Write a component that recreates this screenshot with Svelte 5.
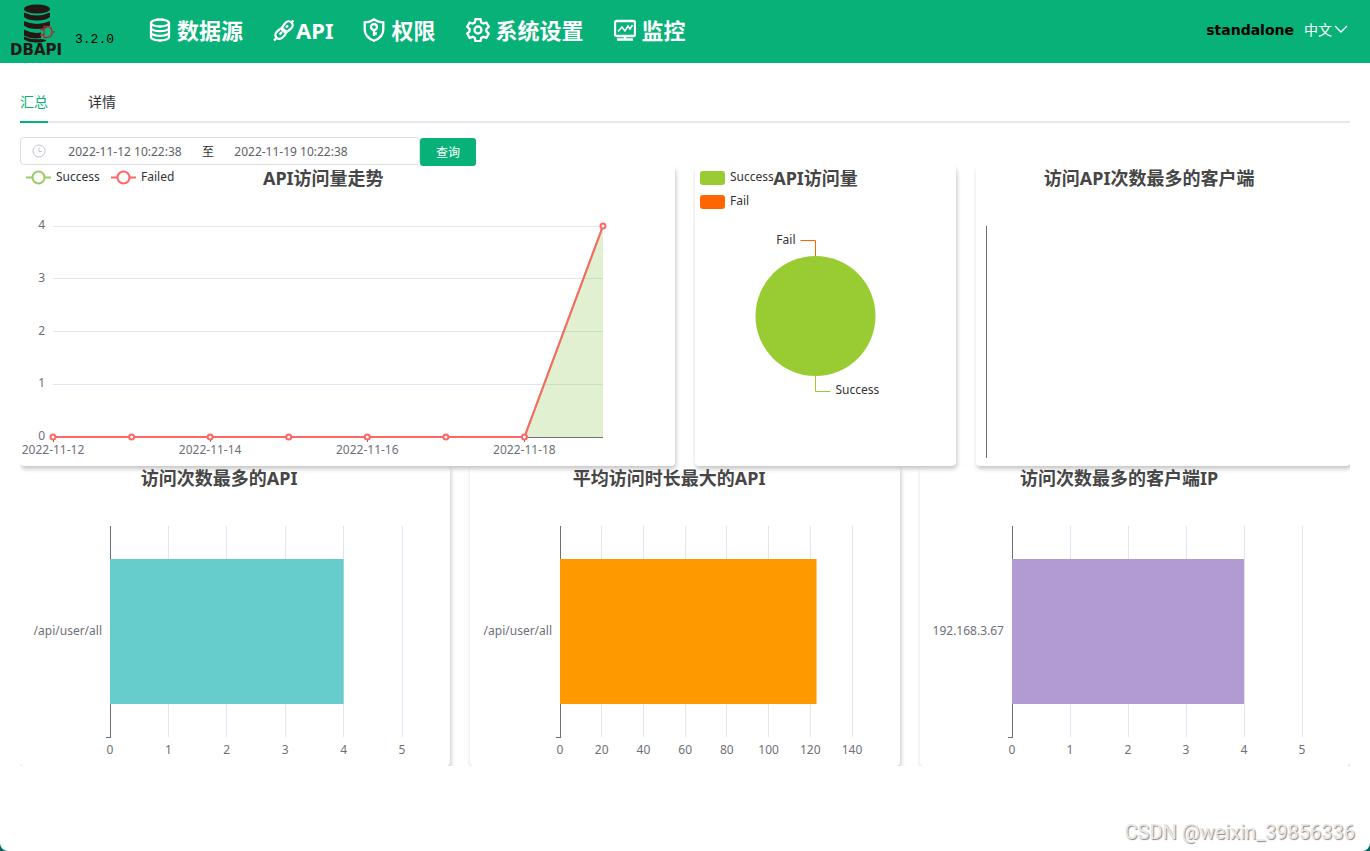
<script lang="ts">
    type BarChart = {
        title: string;
        label: string;
        value: number;
        step: number;
        ticks: number;
        color: string;
        left: number;
    };

    let start = $state("2022-11-12 10:22:38");
    let end = $state("2022-11-19 10:22:38");
    let activeTab = $state("summary");

    let lineCard = $state(655);
    let pieCard = $state(261);
    let clientCard = $state(374);
    let barCard = $state(430);

    const RATIO = 0.926;
    const TOP = 60;
    const BOTTOM = 271;

    const days = ["2022-11-12", "2022-11-13", "2022-11-14", "2022-11-15", "2022-11-16", "2022-11-17", "2022-11-18", "2022-11-19"];
    const success = [0, 0, 0, 0, 0, 0, 0, 4];
    const yTicks = [0, 1, 2, 3, 4];

    const bars: BarChart[] = [
        { title: "访问次数最多的API", label: "/api/user/all", value: 4, step: 1, ticks: 5, color: "#66cccc", left: 90 },
        { title: "平均访问时长最大的API", label: "/api/user/all", value: 123, step: 20, ticks: 7, color: "#ff9900", left: 90 },
        { title: "访问次数最多的客户端IP", label: "192.168.3.67", value: 4, step: 1, ticks: 5, color: "#b29bd2", left: 92 },
    ];

    const lineY = (v: number) => BOTTOM - (v / 4) * (BOTTOM - TOP);

    let lineRight = $derived(Math.round(lineCard * RATIO) - 24);
    let points = $derived(success.map((v, i) => ({ x: 33 + ((lineRight - 33) * i) / 7, y: lineY(v) })));
    let path = $derived(points.map((p) => `${p.x},${p.y}`).join(" "));
    let pieX = $derived(Math.floor((pieCard * RATIO) / 2) + 0.5);
    let barRight = $derived(Math.round(barCard * RATIO) - 16);

    const barX = (b: BarChart, v: number) => b.left + ((barRight - b.left) * v) / (b.step * b.ticks);
    const crisp = (v: number) => Math.floor(v) + 0.5;
</script>

<div class="page">
    <header>
        <svg class="logo" width="54" height="58" viewBox="0 0 54 58" role="img" aria-label="DBAPI">
            <g fill="#231815">
                <ellipse cx="27" cy="8" rx="13" ry="4.5" />
                <path d="M14 11.500q13 6 26 0v4.500q-4 3.500-13 3.500t-13-3.500z" />
                <path d="M14 20q13 6 26 0v4.500q-4 3.500-13 3.500t-13-3.500z" />
                <path d="M14 28.500q8 4.500 17 3v5.500q-10 1.500-17-2.500z" />
                <path d="M14 35.500q7 3.500 17 2.500l5 1v1q-4 1.500-9 1.500-9 0-13-3z" />
            </g>
            <path d="M30 28.500h4M30 34h4M34 25.500v11h3q5 0 5-5.500t-5-5.500zM42 31h3" fill="none" stroke="#b02a2d" stroke-width="1.300" />
            <text x="0" y="54" class="logo-text">DBAPI</text>
        </svg>
        <span class="version">3.2.0</span>

        <nav>
            <a href="#datasource">
                <svg class="icon" viewBox="0 0 22 24">
                    <ellipse cx="11" cy="5" rx="9" ry="3.500" />
                    <path d="M2 5v14c0 2 4 3.500 9 3.500s9-1.500 9-3.500V5M2 9.700c0 2 4 3.500 9 3.500s9-1.500 9-3.500M2 14.400c0 2 4 3.500 9 3.500s9-1.500 9-3.500" />
                </svg>
                <span>数据源</span>
            </a>
            <a href="#api" class="tight">
                <svg class="icon" viewBox="0 0 22 24">
                    <path d="M10 8l2.500-3.200c2-2 4.500-1.800 6-.3s1.700 4-.3 6L15 13c-1.600 1.300-3.700 1-5.200-.4S8.800 9.500 10 8z" />
                    <path d="M7 10.800l-3.200 3c-2 2-1.700 4.500-.3 6s4 1.700 6-.3l3-3.200" />
                    <path d="M7 10.800c1.500-.8 3-.3 4.200 1s1.900 3 1.300 4.500M18 5l2.500-2.500M3.500 20L1 22.500M6.500 16.500l2.500-2.500M13 9.500l2-2" />
                </svg>
                <span>API</span>
            </a>
            <a href="#auth">
                <svg class="icon" viewBox="0 0 22 24">
                    <path d="M11 1.500c3 2 6 2.700 9.300 2.800v7.200c0 5.500-3.500 9-9.300 11.300-5.800-2.300-9.300-5.800-9.300-11.300V4.300C5 4.200 8 3.500 11 1.500z" />
                    <circle cx="11" cy="9" r="3" />
                    <path d="M11 12v6M11 15.500h3" />
                </svg>
                <span>权限</span>
            </a>
            <a href="#settings">
                <svg class="icon wide" viewBox="0 0 24 24">
                    <path d="M9.500 2h5l.7 3.200 2 1.200 3.200-1 2.400 4.200-2.400 2.200v2.400l2.400 2.200-2.400 4.200-3.200-1-2 1.200-.7 3.200h-5l-.7-3.200-2-1.200-3.200 1-2.400-4.200 2.400-2.200v-2.400L1.200 9.600l2.400-4.200 3.200 1 2-1.200z" transform="translate(0 -.8)" />
                    <circle cx="12" cy="12" r="3.500" />
                </svg>
                <span>系统设置</span>
            </a>
            <a href="#monitor">
                <svg class="icon" viewBox="0 0 22 24">
                    <rect x="1" y="3" width="20" height="15" rx="1.500" />
                    <path class="thin" d="M4 13.500l4-4.500 3 4 3-5 2 3 2.500-4" />
                    <path d="M11 18v3.500M3 21.500h16" />
                </svg>
                <span>监控</span>
            </a>
        </nav>

        <div class="user">
            <span class="mode">standalone</span>
            <button class="lang" type="button">
                中文
                <svg width="14" height="14" viewBox="0 0 14 14"><path d="M1 3l6 6 6-6" /></svg>
            </button>
        </div>
    </header>

    <main>
        <div class="tabs" role="tablist">
            <button type="button" role="tab" aria-selected={activeTab === "summary"} class:active={activeTab === "summary"} onclick={() => (activeTab = "summary")}>汇总</button>
            <button type="button" role="tab" aria-selected={activeTab === "detail"} class:active={activeTab === "detail"} onclick={() => (activeTab = "detail")}>详情</button>
        </div>

        <form class="search" onsubmit={(e) => e.preventDefault()}>
            <div class="range">
                <svg width="14" height="14" viewBox="0 0 14 14"><circle cx="7" cy="7" r="6" /><path d="M7 3.500V7.500H10" /></svg>
                <input type="text" aria-label="开始时间" bind:value={start} />
                <span>至</span>
                <input type="text" aria-label="结束时间" bind:value={end} />
            </div>
            <button class="query" type="submit">查询</button>
        </form>

        <div class="charts">
            <section class="card trend" bind:clientWidth={lineCard}>
                <svg width="100%" height="300">
                    {#each [{ name: "Success", color: "#99cc66", x: 6 }, { name: "Failed", color: "#ff6666", x: 91 }] as item}
                        <line x1={item.x} x2={item.x + 25} y1="11.500" y2="11.500" stroke={item.color} stroke-width="2" />
                        <circle cx={item.x + 12.5} cy="11.500" r="6" fill="#fff" stroke={item.color} stroke-width="2" />
                        <text class="legend" x={item.x + 30} y="15">{item.name}</text>
                    {/each}
                    <text class="title" x={(lineCard * RATIO) / 2} y="19">API访问量走势</text>

                    {#each yTicks as tick}
                        <line class={tick ? "split" : "axis"} x1="33" x2={lineRight} y1={crisp(lineY(tick))} y2={crisp(lineY(tick))} />
                        <text class="label end" x="25" y={lineY(tick) + 3}>{tick}</text>
                    {/each}
                    <polygon points="33,{BOTTOM} {path} {lineRight},{BOTTOM}" fill="#99cc66" fill-opacity="0.3" />
                    <polyline points={path} fill="none" stroke="#99cc66" stroke-width="2" />
                    <polyline points={path} fill="none" stroke="#ff6666" stroke-width="2" />
                    {#each points as p, i}
                        {#if i % 2 === 0}
                            <line class="axis" x1={crisp(p.x)} x2={crisp(p.x)} y1={BOTTOM} y2={BOTTOM + 5} />
                            <text class="label" x={p.x} y="288">{days[i]}</text>
                        {/if}
                        <circle cx={p.x} cy={p.y} r="2.500" fill="#fff" stroke="#ff6666" stroke-width="2" />
                    {/each}
                </svg>
            </section>

            <section class="card total" bind:clientWidth={pieCard}>
                <svg width="100%" height="300">
                    <rect x="5" y="5" width="25" height="14" rx="3" fill="#99cc33" />
                    <text class="legend" x="35" y="15">Success</text>
                    <rect x="5" y="29" width="25" height="14" rx="3" fill="#ff6600" />
                    <text class="legend" x="35" y="39">Fail</text>
                    <text class="title" x={pieX} y="19">API访问量</text>

                    <circle cx={pieX} cy="150" r="60" fill="#99cc33" />
                    <path d="M{pieX} 90V74.500H{pieX - 15}" fill="none" stroke="#ff6600" />
                    <text class="legend end" x={pieX - 20} y="78">Fail</text>
                    <path d="M{pieX} 210V225.500H{pieX + 15}" fill="none" stroke="#99cc33" />
                    <text class="legend" x={pieX + 20} y="228">Success</text>
                </svg>
            </section>

            <section class="card clients" bind:clientWidth={clientCard}>
                <svg width="100%" height="300">
                    <text class="title" x={(clientCard * RATIO) / 2} y="19">访问API次数最多的客户端</text>
                    <line class="axis" x1="10.500" x2="10.500" y1={TOP} y2="292" />
                </svg>
            </section>

            {#each bars as bar}
                <section class="card rank" bind:clientWidth={barCard}>
                    <svg width="100%" height="300">
                        <text class="title" x={(barCard * RATIO) / 2} y="19">{bar.title}</text>
                        {#each Array(bar.ticks + 1) as _, i}
                            {@const x = barX(bar, i * bar.step)}
                            {#if i > 0}
                                <line class="split" x1={crisp(x)} x2={crisp(x)} y1={TOP} y2={BOTTOM} />
                            {/if}
                            <text class="label" {x} y="288">{i * bar.step}</text>
                        {/each}
                        <rect x={bar.left} y="93" width={barX(bar, bar.value) - bar.left} height="145" fill={bar.color} />
                        <path class="axis" d="M{bar.left + 0.5} {TOP}V93M{bar.left + 0.5} 238V{BOTTOM + 0.5}h-5" />
                        <text class="label end" x={bar.left - 8} y="169">{bar.label}</text>
                    </svg>
                </section>
            {/each}
        </div>
    </main>

    <footer>CSDN @weixin_39856336</footer>
</div>

<style>
    :global(body) {
        margin: 0;
        background: #06695f;
    }

    .page {
        min-height: 100vh;
        display: flex;
        flex-direction: column;
        background: #fff;
        border-radius: 0 0 8px 8px;
        font-family: "Noto Sans", "Noto Sans CJK SC", sans-serif;
        color: #303133;
    }

    button,
    input {
        font-family: inherit;
        border: 0;
        padding: 0;
        background: none;
    }

    header {
        box-sizing: border-box;
        height: 63px;
        display: flex;
        align-items: center;
        padding: 0 22px 3px 10px;
        background: #07b177;
    }

    .logo-text {
        font: bold 15px "DejaVu Sans", sans-serif;
        fill: #231815;
    }

    .version {
        margin: 18px 35px 0 11px;
        font: 13px "Liberation Mono", monospace;
        color: #000;
    }

    nav {
        display: flex;
        gap: 30px;
    }

    nav a {
        display: flex;
        align-items: center;
        gap: 6px;
        color: #fff;
        font-size: 22px;
        line-height: 30px;
        font-weight: bold;
        text-decoration: none;
    }

    nav a.tight {
        gap: 1px;
    }

    .icon {
        width: 22px;
        height: 24px;
        fill: none;
        stroke: #fff;
        stroke-width: 2.3;
    }

    .icon.wide {
        width: 24px;
    }

    .icon .thin {
        stroke-width: 1.5;
    }

    .user {
        margin-left: auto;
        display: flex;
        align-items: center;
        gap: 10px;
    }

    .mode {
        font: bold 14px "DejaVu Sans", sans-serif;
        color: #000;
    }

    .lang {
        display: flex;
        align-items: center;
        gap: 2px;
        color: #fff;
        font-size: 14px;
        line-height: 20px;
    }

    .lang svg {
        fill: none;
        stroke: #fff;
        stroke-width: 1.4;
    }

    main {
        padding: 20px 20px 0;
    }

    .tabs {
        display: flex;
        gap: 40px;
        height: 40px;
        box-shadow: inset 0 -2px #e4e7ed;
    }

    .tabs button {
        padding-bottom: 2px;
        border-bottom: 2px solid transparent;
        font-size: 14px;
        color: #303133;
    }

    .tabs button.active {
        color: #07b177;
        border-color: #07b177;
    }

    .search {
        display: flex;
        align-items: flex-end;
        height: 29px;
        margin-top: 14px;
    }

    .range {
        box-sizing: border-box;
        align-self: flex-start;
        width: 400px;
        height: 28px;
        display: flex;
        align-items: center;
        padding: 0 11px;
        border: 1px solid #dcdfe6;
        border-radius: 4px;
        font-size: 12px;
    }

    .range svg {
        margin-right: 9px;
        fill: none;
        stroke: #c0c4cc;
    }

    .range input {
        width: 140px;
        text-align: center;
        font-size: 12px;
        color: #606266;
    }

    .range span {
        width: 26px;
        text-align: center;
    }

    .query {
        width: 56px;
        height: 28px;
        border-radius: 3px;
        background: #07b177;
        color: #fff;
        font-size: 12px;
    }

    .charts {
        display: grid;
        grid-template-columns: repeat(24, minmax(0, 1fr));
        column-gap: 20px;
        overflow: hidden;
    }

    .card {
        height: 300px;
        border-radius: 4px;
        box-shadow: 1px 3px 4px rgba(0, 0, 0, 0.22);
    }

    .card svg {
        display: block;
    }

    .trend {
        grid-column: span 12;
    }

    .total {
        grid-column: span 5;
    }

    .clients {
        grid-column: span 7;
    }

    .rank {
        grid-column: span 8;
    }

    .title {
        font-size: 18px;
        font-weight: bold;
        fill: #464646;
        text-anchor: middle;
    }

    .label {
        font-size: 12px;
        line-height: 12px;
        fill: #6e7079;
        text-anchor: middle;
    }

    .legend {
        font-size: 12px;
        fill: #333;
    }

    .end {
        text-anchor: end;
    }

    .axis,
    .split {
        fill: none;
        stroke: #6e7079;
        shape-rendering: crispEdges;
    }

    .split {
        stroke: #e0e6f1;
    }

    footer {
        margin-top: auto;
        padding: 0 15px 7px;
        text-align: right;
        font: 20px Roboto, sans-serif;
        color: #e8e8e8;
        text-shadow: 1px 1px 1px #888;
    }
</style>
